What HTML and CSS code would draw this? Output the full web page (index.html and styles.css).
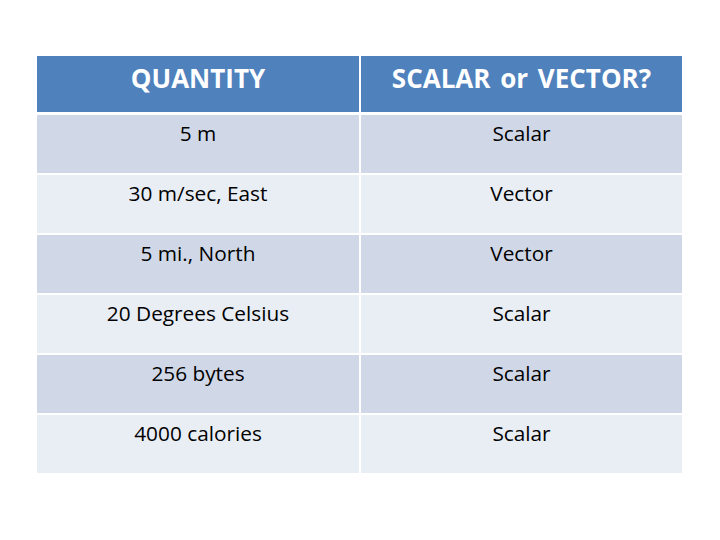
FILE: index.html
```html
<!DOCTYPE html>
<html>
<head>
<meta charset="utf-8">
<link rel="stylesheet" href="styles.css">
</head>
<body>
<div class="table">
  <div class="cell head">QUANTITY</div>
  <div class="cell head">SCALAR or VECTOR?</div>
  <div class="cell odd">5 m</div>
  <div class="cell odd">Scalar</div>
  <div class="cell even">30 m/sec, East</div>
  <div class="cell even">Vector</div>
  <div class="cell odd">5 mi., North</div>
  <div class="cell odd">Vector</div>
  <div class="cell even">20 Degrees Celsius</div>
  <div class="cell even">Scalar</div>
  <div class="cell odd">256 bytes</div>
  <div class="cell odd">Scalar</div>
  <div class="cell even">4000 calories</div>
  <div class="cell even">Scalar</div>
</div>
</body>
</html>
```
FILE: styles.css
```css
html, body {
  margin: 0;
  padding: 0;
  background: #ffffff;
}
body {
  width: 720px;
  height: 540px;
  overflow: hidden;
  font-family: "Open Sans", Lato, sans-serif;
}
.table {
  margin: 56px 0 0 37px;
  width: 645px;
  display: grid;
  grid-template-columns: 322px 321px;
  grid-template-rows: 57px repeat(6, 58px);
  column-gap: 2px;
  row-gap: 2px;
}
.cell {
  text-align: center;
  color: #000000;
  font-size: 20.8px;
  line-height: 24px;
  padding-top: 6px;
  box-sizing: border-box;
}
.head {
  background: #4f81bd;
  color: #ffffff;
  font-weight: 700;
  font-size: 26px;
  word-spacing: 3px;
  line-height: 30px;
  padding-top: 7px;
  margin-bottom: 1px;
}
.odd {
  background: #d0d8e8;
}
.even {
  background: #e9edf4;
}
```
